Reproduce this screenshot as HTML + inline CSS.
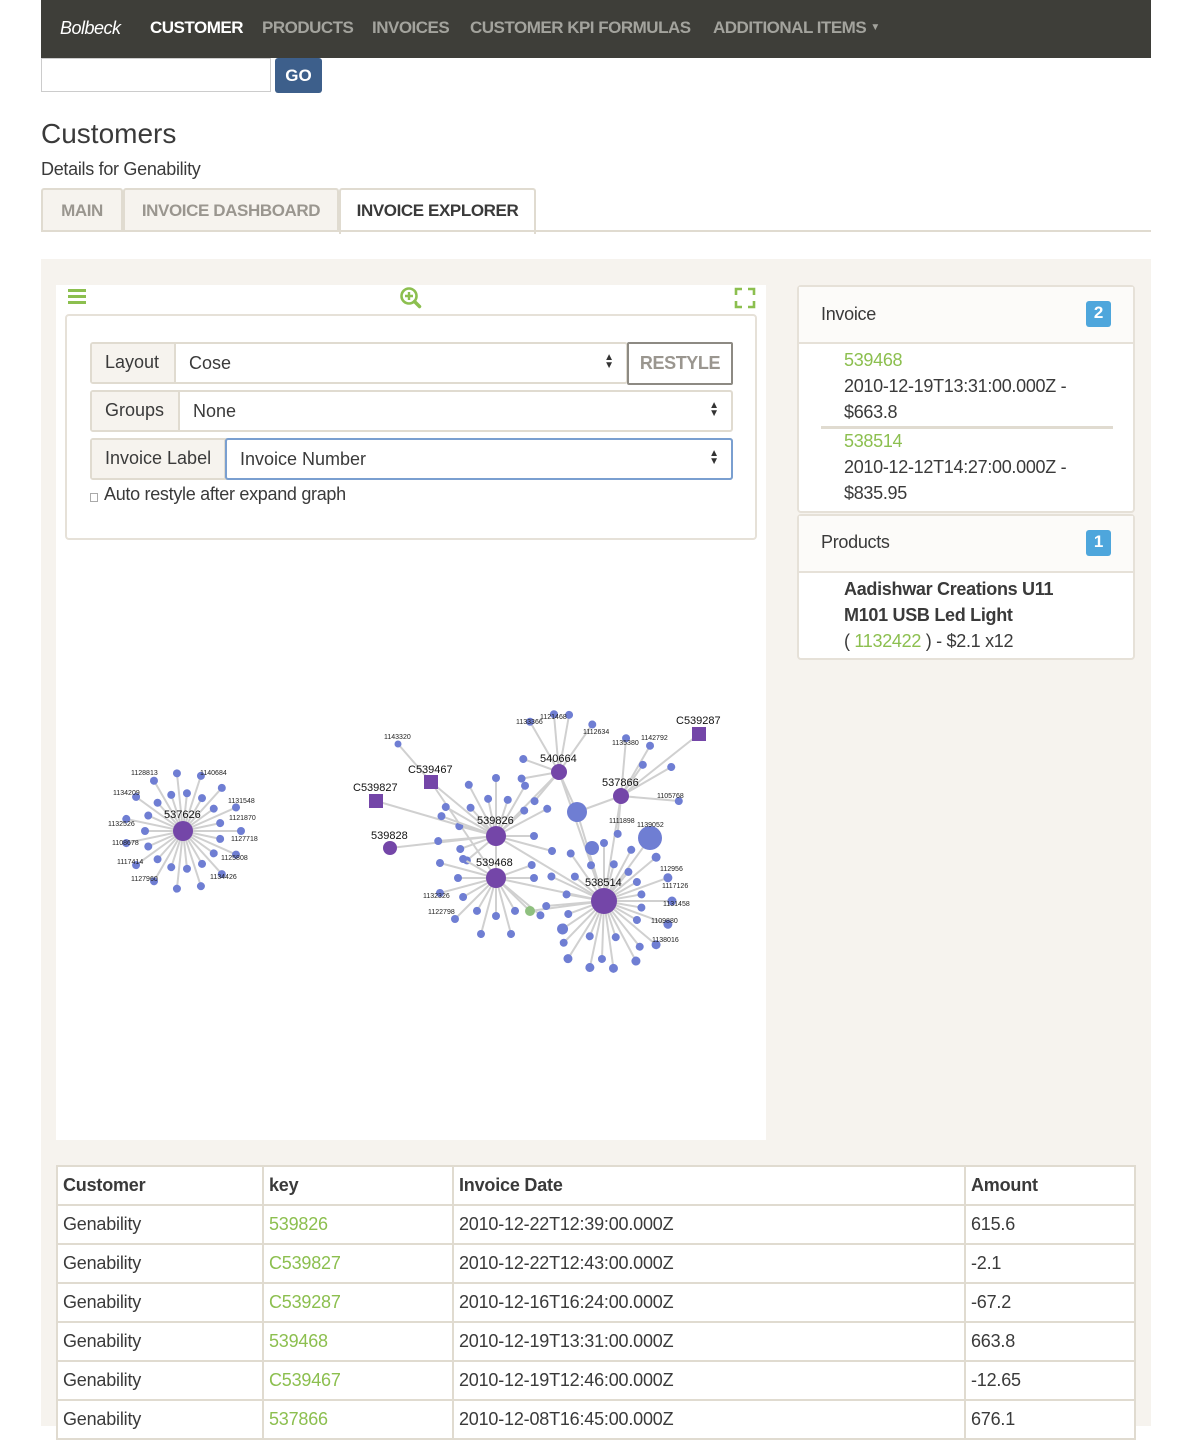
<!DOCTYPE html>
<html><head><meta charset="utf-8">
<style>
*{box-sizing:border-box;margin:0;padding:0}
body{width:1202px;height:1426px;overflow:hidden;background:#fff;font-family:"Liberation Sans",sans-serif;color:#3a3a3a;position:relative}
.abs{position:absolute}
.nav{left:41px;top:0;width:1110px;height:58px;background:#3e3e39}
.nav span{position:absolute;top:18px;font-size:17px;font-weight:bold;color:#a3a39d;letter-spacing:-0.5px}
.green{color:#8cbf4f}
.tab{position:absolute;top:188px;height:44px;border:2px solid #e0dbd0;border-bottom:none;background:#f6f3ee;border-radius:3px 3px 0 0;font-size:17px;font-weight:bold;color:#9a968f;padding-top:11px;text-align:center;letter-spacing:-0.4px}
.ig{position:absolute;left:90px;height:42px;border:2px solid #e0dbd0;border-radius:3px;background:#fff}
.ig .l{position:absolute;left:0;top:0;bottom:0;background:#f6f3ee;border-right:2px solid #e0dbd0;font-size:18px;padding:8px 0 0 13px;color:#3a3a3a}
.ig .v{position:absolute;top:9px;font-size:18px;color:#3a3a3a}
.ig .ar{position:absolute;right:12px;top:10px;font-size:10px;line-height:8px;color:#333}
.panel{position:absolute;left:797px;width:338px;background:#fff;border:2px solid #e6e1d8;border-radius:4px;letter-spacing:-0.3px}
.badge{position:absolute;right:22px;top:14px;width:25px;height:26px;background:#4ea6dc;color:#fff;border-radius:3px;font-weight:bold;font-size:17px;text-align:center;padding-top:2px}
table{position:absolute;left:56px;top:1165px;width:1080px;border-collapse:collapse;background:#fff;font-size:18px;letter-spacing:-0.2px}
td{border:2px solid #e0dbd0;height:39px;padding:0 5px;color:#3a3a3a}
tr:first-child td{font-weight:bold}
</style></head><body>
<div class="abs nav">
<span style="left:19px;color:#fff;font-style:italic;font-weight:normal;font-size:18px">Bolbeck</span>
<span style="left:109px;color:#fff">CUSTOMER</span>
<span style="left:221px">PRODUCTS</span>
<span style="left:331px">INVOICES</span>
<span style="left:429px">CUSTOMER KPI FORMULAS</span>
<span style="left:672px">ADDITIONAL ITEMS <span style="position:static;font-size:10px;vertical-align:3px">▼</span></span>
</div>
<div class="abs" style="left:41px;top:58px;width:230px;height:34px;border:1px solid #ccc"></div>
<div class="abs" style="left:275px;top:58px;width:47px;height:35px;background:#3d5f8b;border-radius:3px;color:#fff;font-weight:bold;font-size:17px;text-align:center;padding-top:8px">GO</div>
<div class="abs" style="left:41px;top:118px;font-size:28px;color:#3a3a3a">Customers</div>
<div class="abs" style="left:41px;top:159px;font-size:18px;letter-spacing:-0.3px">Details for Genability</div>
<div class="tab" style="left:41px;width:82px">MAIN</div>
<div class="tab" style="left:123px;width:216px">INVOICE DASHBOARD</div>
<div class="tab" style="left:339px;width:197px;background:#fff;color:#3a3a3a;height:46px">INVOICE EXPLORER</div>
<div class="abs" style="left:41px;top:230px;width:1110px;height:2px;background:#e0dbd0"></div>

<div class="abs" style="left:41px;top:259px;width:1110px;height:1167px;background:#f6f3ee"></div>
<div class="abs" style="left:56px;top:285px;width:710px;height:855px;background:#fff"></div>
<svg class="abs" style="left:66px;top:287px" width="22" height="20"><rect x="2" y="2" width="18" height="3" fill="#8cbf4f"/><rect x="2" y="8" width="18" height="3" fill="#8cbf4f"/><rect x="2" y="14" width="18" height="3" fill="#8cbf4f"/></svg>
<svg class="abs" style="left:398px;top:285px" width="26" height="26"><circle cx="11" cy="11" r="7.5" fill="none" stroke="#8cbf4f" stroke-width="2.6"/><path d="M7 11h8M11 7v8" stroke="#8cbf4f" stroke-width="2.4"/><path d="M16.5 16.5l5 5" stroke="#8cbf4f" stroke-width="3.5" stroke-linecap="round"/></svg>
<svg class="abs" style="left:734px;top:287px" width="22" height="22"><path d="M2 8V2h6M14 2h6v6M20 14v6h-6M8 20H2v-6" fill="none" stroke="#8cbf4f" stroke-width="2.6"/></svg>

<div class="abs" style="left:65px;top:314px;width:692px;height:226px;border:2px solid #e6e1d8;border-radius:4px;background:#fff"></div>
<div class="ig" style="top:342px;width:538px"><div class="l" style="width:84px">Layout</div><div class="v" style="left:97px">Cose</div><div class="ar">▲<br>▼</div></div>
<div class="abs" style="left:627px;top:342px;width:106px;height:43px;border:2px solid #8d8a83;border-radius:2px;background:#fff;color:#9a968f;font-size:18px;font-weight:bold;text-align:center;padding-top:9px;letter-spacing:-0.4px">RESTYLE</div>
<div class="ig" style="top:390px;width:643px"><div class="l" style="width:88px">Groups</div><div class="v" style="left:101px">None</div><div class="ar">▲<br>▼</div></div>
<div class="ig" style="top:438px;width:643px;border-color:#e0dbd0"><div class="l" style="width:134px">Invoice Label</div><div style="position:absolute;left:133px;top:-2px;right:-2px;bottom:-2px;border:2px solid #7a9fd0;border-radius:3px"></div><div class="v" style="left:148px">Invoice Number</div><div class="ar">▲<br>▼</div></div>
<div class="abs" style="left:90px;top:492px;width:8px;height:9px;border:1px solid #aaa;margin-top:1px"></div>
<div class="abs" style="left:104px;top:484px;font-size:18px;letter-spacing:-0.3px">Auto restyle after expand graph</div>

<svg class="abs" style="left:56px;top:540px" width="710" height="600" viewBox="56 540 710 600">
<defs>
<g id="s1"><line x1="0" y1="0" x2="58" y2="0" stroke="#d0d0d0" stroke-width="2"/><circle cx="58" cy="0" r="4" fill="#6f7ed3"/></g>
<g id="s2"><line x1="0" y1="0" x2="38" y2="0" stroke="#d0d0d0" stroke-width="2"/><circle cx="38" cy="0" r="4" fill="#6f7ed3"/></g>
<g id="s3"><line x1="0" y1="0" x2="68" y2="0" stroke="#d0d0d0" stroke-width="2"/><circle cx="68" cy="0" r="4.5" fill="#6f7ed3"/></g>
<g id="s4"><line x1="0" y1="0" x2="50" y2="0" stroke="#d0d0d0" stroke-width="2"/><circle cx="50" cy="0" r="5.5" fill="#6f7ed3"/></g>
</defs>
<g transform="translate(183,831)">
<use href="#s1" transform="rotate(0)"/><use href="#s2" transform="rotate(12)"/><use href="#s1" transform="rotate(24)"/><use href="#s2" transform="rotate(36)"/><use href="#s1" transform="rotate(48)"/><use href="#s2" transform="rotate(60)"/><use href="#s1" transform="rotate(72)"/><use href="#s2" transform="rotate(84)"/><use href="#s1" transform="rotate(96)"/><use href="#s2" transform="rotate(108)"/><use href="#s1" transform="rotate(120)"/><use href="#s2" transform="rotate(132)"/><use href="#s1" transform="rotate(144)"/><use href="#s2" transform="rotate(156)"/><use href="#s1" transform="rotate(168)"/><use href="#s2" transform="rotate(180)"/><use href="#s1" transform="rotate(192)"/><use href="#s2" transform="rotate(204)"/><use href="#s1" transform="rotate(216)"/><use href="#s2" transform="rotate(228)"/><use href="#s1" transform="rotate(240)"/><use href="#s2" transform="rotate(252)"/><use href="#s1" transform="rotate(264)"/><use href="#s2" transform="rotate(276)"/><use href="#s1" transform="rotate(288)"/><use href="#s2" transform="rotate(300)"/><use href="#s1" transform="rotate(312)"/><use href="#s2" transform="rotate(324)"/><use href="#s1" transform="rotate(336)"/><use href="#s2" transform="rotate(348)"/>
<circle r="10" fill="#7446a8"/>
</g>
<g stroke="#d0d0d0" stroke-width="2">
<line x1="496" y1="836" x2="390" y2="848"/><line x1="496" y1="836" x2="376" y2="801"/><line x1="496" y1="836" x2="431" y2="782"/><line x1="496" y1="836" x2="559" y2="772"/><line x1="496" y1="836" x2="604" y2="901"/><line x1="496" y1="878" x2="604" y2="901"/><line x1="496" y1="878" x2="431" y2="782"/><line x1="604" y1="901" x2="621" y2="796"/><line x1="604" y1="901" x2="559" y2="772"/><line x1="621" y1="796" x2="699" y2="734"/><line x1="621" y1="796" x2="577" y2="812"/><line x1="559" y1="772" x2="577" y2="812"/><line x1="604" y1="901" x2="650" y2="838"/><line x1="604" y1="901" x2="577" y2="812"/><line x1="496" y1="878" x2="530" y2="911"/><line x1="604" y1="901" x2="530" y2="911"/><line x1="398" y1="744" x2="431" y2="782"/><line x1="496" y1="836" x2="496" y2="878"/>
</g>
<g transform="translate(496,836)">
<use href="#s2" transform="rotate(160)"/><use href="#s1" transform="rotate(175)"/><use href="#s2" transform="rotate(195)"/><use href="#s1" transform="rotate(210)"/><use href="#s2" transform="rotate(228)"/><use href="#s1" transform="rotate(242)"/><use href="#s2" transform="rotate(258)"/><use href="#s1" transform="rotate(270)"/><use href="#s2" transform="rotate(288)"/><use href="#s1" transform="rotate(300)"/><use href="#s2" transform="rotate(318)"/><use href="#s1" transform="rotate(332)"/><use href="#s2" transform="rotate(0)"/><use href="#s1" transform="rotate(15)"/><use href="#s2" transform="rotate(140)"/><use href="#s1" transform="rotate(200)"/>
</g>
<g transform="translate(496,878)">
<use href="#s2" transform="rotate(90)"/><use href="#s1" transform="rotate(105)"/><use href="#s2" transform="rotate(120)"/><use href="#s1" transform="rotate(135)"/><use href="#s2" transform="rotate(150)"/><use href="#s1" transform="rotate(165)"/><use href="#s2" transform="rotate(180)"/><use href="#s1" transform="rotate(195)"/><use href="#s2" transform="rotate(210)"/><use href="#s1" transform="rotate(75)"/><use href="#s2" transform="rotate(60)"/><use href="#s2" transform="rotate(0)"/><use href="#s2" transform="rotate(-20)"/><use href="#s1" transform="rotate(40)"/>
</g>
<g transform="translate(604,901)">
<use href="#s1" transform="rotate(-90)"/><use href="#s2" transform="rotate(-75)"/><use href="#s1" transform="rotate(-62)"/><use href="#s2" transform="rotate(-50)"/><use href="#s3" transform="rotate(-40)"/><use href="#s2" transform="rotate(-30)"/><use href="#s3" transform="rotate(-20)"/><use href="#s2" transform="rotate(-10)"/><use href="#s3" transform="rotate(0)"/><use href="#s2" transform="rotate(10)"/><use href="#s3" transform="rotate(20)"/><use href="#s2" transform="rotate(30)"/><use href="#s3" transform="rotate(40)"/><use href="#s1" transform="rotate(52)"/><use href="#s3" transform="rotate(62)"/><use href="#s2" transform="rotate(72)"/><use href="#s3" transform="rotate(82)"/><use href="#s1" transform="rotate(92)"/><use href="#s3" transform="rotate(102)"/><use href="#s2" transform="rotate(112)"/><use href="#s3" transform="rotate(122)"/><use href="#s1" transform="rotate(134)"/><use href="#s4" transform="rotate(146)"/><use href="#s2" transform="rotate(160)"/><use href="#s1" transform="rotate(175)"/><use href="#s2" transform="rotate(190)"/><use href="#s1" transform="rotate(205)"/><use href="#s2" transform="rotate(220)"/><use href="#s1" transform="rotate(235)"/><use href="#s2" transform="rotate(250)"/>
</g>
<g transform="translate(559,772)">
<use href="#s1" transform="rotate(-120)"/><use href="#s1" transform="rotate(-95)"/><use href="#s1" transform="rotate(-80)"/><use href="#s1" transform="rotate(-55)"/><use href="#s2" transform="rotate(170)"/><use href="#s2" transform="rotate(200)"/><use href="#s2" transform="rotate(130)"/>
</g>
<g transform="translate(621,796)">
<use href="#s1" transform="rotate(-85)"/><use href="#s1" transform="rotate(-60)"/><use href="#s2" transform="rotate(-55)"/><use href="#s1" transform="rotate(-30)"/><use href="#s1" transform="rotate(5)"/><use href="#s2" transform="rotate(95)"/>
</g>
<g fill="#6f7ed3">
<circle cx="577" cy="812" r="10"/><circle cx="650" cy="838" r="12"/><circle cx="398" cy="744" r="3.5"/><circle cx="592" cy="848" r="7"/>
</g>
<circle cx="530" cy="911" r="5" fill="#8fc07f"/>
<g fill="#7446a8">
<circle cx="496" cy="836" r="10"/><circle cx="496" cy="878" r="10"/><circle cx="604" cy="901" r="13"/><circle cx="559" cy="772" r="8"/><circle cx="621" cy="796" r="8"/><circle cx="390" cy="848" r="7"/>
<rect x="369" y="794" width="14" height="14"/><rect x="424" y="775" width="14" height="14"/><rect x="692" y="727" width="14" height="14"/>
</g>
<g font-size="11" fill="#111" font-family="Liberation Sans,sans-serif">
<text x="164" y="818">537626</text><text x="477" y="824">539826</text><text x="476" y="866">539468</text><text x="585" y="886">538514</text><text x="540" y="762">540664</text><text x="602" y="786">537866</text><text x="371" y="839">539828</text><text x="353" y="791">C539827</text><text x="408" y="773">C539467</text><text x="676" y="724">C539287</text>
</g>
<g font-size="7" fill="#222" font-family="Liberation Sans,sans-serif">
<text x="384" y="739">1143320</text><text x="516" y="724">1133366</text><text x="540" y="719">1121468</text><text x="583" y="734">1112634</text><text x="612" y="745">1135380</text><text x="641" y="740">1142792</text><text x="657" y="798">1105768</text><text x="609" y="823">1111898</text><text x="637" y="827">1139052</text><text x="131" y="775">1128813</text><text x="113" y="795">1134209</text><text x="108" y="826">1132526</text><text x="112" y="845">1108678</text><text x="117" y="864">1117414</text><text x="131" y="881">1127960</text><text x="200" y="775">1140684</text><text x="228" y="803">1131548</text><text x="229" y="820">1121870</text><text x="231" y="841">1127718</text><text x="221" y="860">1125808</text><text x="210" y="879">1134426</text><text x="423" y="898">1132326</text><text x="428" y="914">1122798</text><text x="660" y="871">112956</text><text x="662" y="888">1117126</text><text x="663" y="906">1131458</text><text x="651" y="923">1109880</text><text x="652" y="942">1138016</text>
</g>
</svg>

<div class="panel" style="top:285px;height:228px">
<div style="position:absolute;left:0;right:0;top:0;height:57px;border-bottom:2px solid #e6e1d8;background:#fcfbf9"></div>
<div class="abs" style="left:22px;top:17px;font-size:18px">Invoice</div><div class="badge">2</div>
<div class="abs green" style="left:45px;top:63px;font-size:18px">539468</div>
<div class="abs" style="left:45px;top:89px;font-size:18px">2010-12-19T13:31:00.000Z -</div>
<div class="abs" style="left:45px;top:115px;font-size:18px">$663.8</div>
<div class="abs" style="left:22px;top:139px;width:292px;height:3px;background:#e0dbd0"></div>
<div class="abs green" style="left:45px;top:144px;font-size:18px">538514</div>
<div class="abs" style="left:45px;top:170px;font-size:18px">2010-12-12T14:27:00.000Z -</div>
<div class="abs" style="left:45px;top:196px;font-size:18px">$835.95</div>
</div>
<div class="panel" style="top:514px;height:146px">
<div style="position:absolute;left:0;right:0;top:0;height:57px;border-bottom:2px solid #e6e1d8;background:#fcfbf9"></div>
<div class="abs" style="left:22px;top:16px;font-size:18px">Products</div><div class="badge" style="top:14px">1</div>
<div class="abs" style="left:45px;top:63px;font-size:18px;font-weight:bold">Aadishwar Creations U11</div>
<div class="abs" style="left:45px;top:89px;font-size:18px;font-weight:bold">M101 USB Led Light</div>
<div class="abs" style="left:45px;top:115px;font-size:18px">( <span class="green">1132422</span> ) - $2.1 x12</div>
</div>

<table>
<tr><td style="width:206px">Customer</td><td style="width:190px">key</td><td style="width:512px">Invoice Date</td><td>Amount</td></tr>
<tr><td>Genability</td><td class="green">539826</td><td>2010-12-22T12:39:00.000Z</td><td>615.6</td></tr>
<tr><td>Genability</td><td class="green">C539827</td><td>2010-12-22T12:43:00.000Z</td><td>-2.1</td></tr>
<tr><td>Genability</td><td class="green">C539287</td><td>2010-12-16T16:24:00.000Z</td><td>-67.2</td></tr>
<tr><td>Genability</td><td class="green">539468</td><td>2010-12-19T13:31:00.000Z</td><td>663.8</td></tr>
<tr><td>Genability</td><td class="green">C539467</td><td>2010-12-19T12:46:00.000Z</td><td>-12.65</td></tr>
<tr><td>Genability</td><td class="green">537866</td><td>2010-12-08T16:45:00.000Z</td><td>676.1</td></tr>
</table>
</body></html>
